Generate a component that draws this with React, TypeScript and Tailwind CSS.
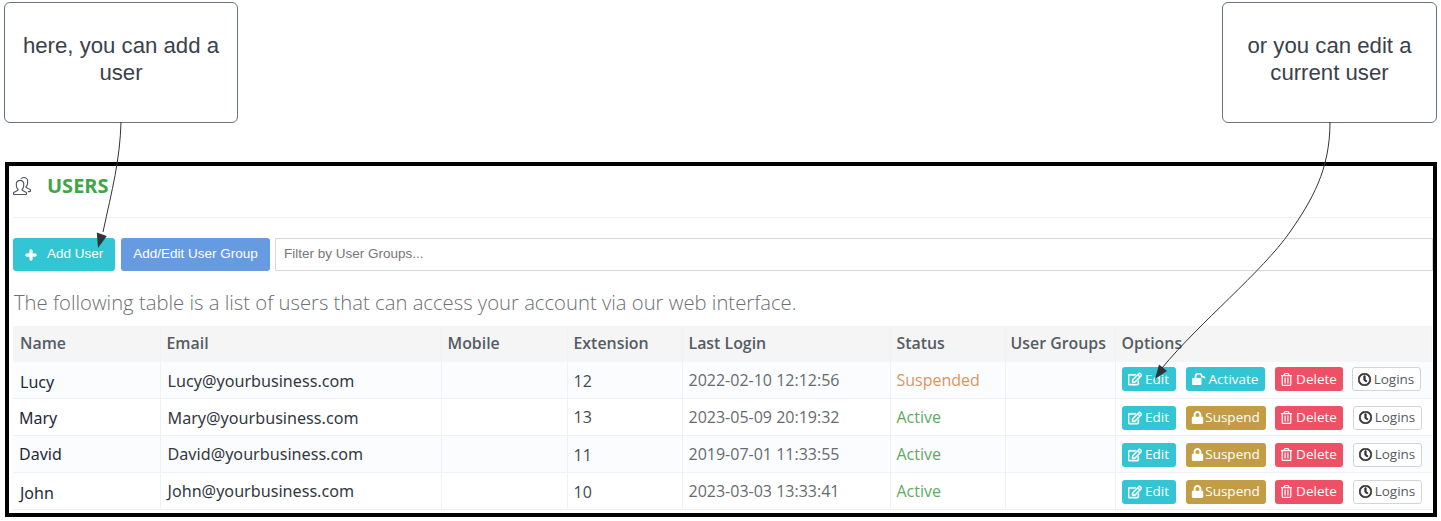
import { FaPlus, FaRegEdit, FaLock, FaRegTrashAlt, FaRegClock } from "react-icons/fa";
import { SlPeople } from "react-icons/sl";

const users = [
  { name: "Lucy", email: "Lucy@yourbusiness.com", ext: "12", login: "2022-02-10 12:12:56", status: "Suspended", rowCls: "h-[36px] bg-[#fbfcfe]", nameCls: "pl-[7px] pt-[4px]", emailCls: "pt-[2px]", extCls: "pt-[2px]", infoCls: "pt-[1px]", btnCls: "pb-[1px]" },
  { name: "Mary", email: "Mary@yourbusiness.com", ext: "13", login: "2023-05-09 20:19:32", status: "Active", rowCls: "h-[37px] bg-white", nameCls: "pl-[6px] pt-[2px]", emailCls: "pt-[4px]", extCls: "", infoCls: "", btnCls: "pt-[2px]" },
  { name: "David", email: "David@yourbusiness.com", ext: "11", login: "2019-07-01 11:33:55", status: "Active", rowCls: "h-[37px] bg-[#fbfcfe]", nameCls: "pl-[6px]", emailCls: "pt-[2px]", extCls: "pt-[2px]", infoCls: "", btnCls: "pt-[2px]" },
  { name: "John", email: "John@yourbusiness.com", ext: "10", login: "2023-03-03 13:33:41", status: "Active", rowCls: "h-[37px] bg-white", nameCls: "pl-[7px] pt-[4px]", emailCls: "pt-[2px]", extCls: "pt-[3px]", infoCls: "", btnCls: "pt-[2px]" },
];

const headers = ["Name", "Email", "Mobile", "Extension", "Last Login", "Status", "User Groups", "Options"];

function Callout({ lines, width }: { lines: string[]; width: string }) {
  return (
    <div className={`h-[121px] ${width} rounded-[6px] border border-[#6b7280] bg-white pt-[30px] text-center font-['Liberation_Sans',sans-serif] text-[22.2px] leading-[26.5px] text-[#3a414a]`}>
      {lines.map((l) => (
        <div key={l}>{l}</div>
      ))}
    </div>
  );
}

function Btn({ className, icon, label }: { className: string; icon: React.ReactNode; label: string }) {
  return (
    <span className={`flex h-[24px] items-center justify-center rounded-[3px] text-[13.5px] ${className}`}>
      {icon}
      {label}
    </span>
  );
}

function OpenLock() {
  return (
    <svg width="14" height="12" viewBox="0 0 14 12" className="shrink-0">
      <rect x="0" y="5" width="9.5" height="7" rx="1" fill="currentColor" />
      <path d="M3.5 5.5 V4 a3.2 3.2 0 0 1 6.4 -0.3 a3 3 0 0 1 3 1.5" stroke="currentColor" strokeWidth="1.8" fill="none" />
    </svg>
  );
}

export default function App() {
  return (
    <div className="relative h-[521px] w-[1441px] overflow-hidden bg-white font-['Open_Sans',sans-serif]">
      <div className="flex justify-between pl-[4px] pr-[4px] pt-[2px]">
        <Callout width="w-[234px]" lines={["here, you can add a", "user"]} />
        <Callout width="w-[215px]" lines={["or you can edit a", "current user"]} />
      </div>

      <div className="ml-[5px] mt-[39px] h-[355px] w-[1432px] overflow-hidden border-[4px] border-black bg-white pl-[4px]">
        <div className="flex h-[52px] items-center border-b border-[#eef0f2] pb-[12px]">
          <SlPeople className="text-[18px] text-[#4b5563]" />
          <span className="ml-[16px] text-[20px] font-bold text-[#3fa648]">USERS</span>
        </div>

        <div className="mt-[20px] flex h-[33px] font-['Liberation_Sans',sans-serif] text-[13.5px] text-white">
          <span className="flex w-[102px] items-center rounded-[3px] bg-[#33c5d3] pl-[12px]">
            <FaPlus className="mr-[10px] text-[12px] stroke-[40]" />
            Add User
          </span>
          <span className="ml-[6px] flex w-[149px] items-center justify-center rounded-[3px] bg-[#669ae1]">Add/Edit User Group</span>
          <div className="ml-[5px] flex flex-1 items-center border border-[#d9d9d9] pl-[8px] text-[#777]">Filter by User Groups...</div>
        </div>

        <p className="ml-[1px] mt-[17px] text-[20.25px] leading-[28px] font-light text-[#6c6f73]">
          The following table is a list of users that can access your account via our web interface.
        </p>

        <table className="mt-[10px] w-[1419px] table-fixed border-collapse text-[16px]">
          <colgroup>
            <col className="w-[147px]" />
            <col className="w-[281px]" />
            <col className="w-[126px]" />
            <col className="w-[115px]" />
            <col className="w-[208px]" />
            <col className="w-[115px]" />
            <col className="w-[110px]" />
            <col />
          </colgroup>
          <thead>
            <tr className="h-[36px] bg-[#f5f5f5]">
              {headers.map((h, i) => (
                <th key={h} className={`whitespace-nowrap border-x border-[#eef1f5] ${i === 0 ? "pl-[7px]" : i === 6 ? "pl-[5px]" : "pl-[6px]"} text-left text-[15.9px] font-semibold text-[#555c66] first:border-l-0`}>
                  {h}
                </th>
              ))}
            </tr>
          </thead>
          <tbody>
            {users.map((u) => (
              <tr key={u.name} className={`border-b border-[#eef1f5] ${u.rowCls}`}>
                <td className={`border-r border-[#eef1f5] font-['Noto_Sans',sans-serif] text-[#1f2a38] ${u.nameCls}`}>{u.name}</td>
                <td className={`border-r border-[#eef1f5] pl-[7px] font-['Noto_Sans',sans-serif] text-[16.15px] text-[#33393f] ${u.emailCls}`}>{u.email}</td>
                <td className="border-r border-[#eef1f5]" />
                <td className={`border-r border-[#eef1f5] pl-[6px] text-[#444a50] ${u.extCls}`}>{u.ext}</td>
                <td className={`border-r border-[#eef1f5] pl-[6px] text-[#666b70] ${u.infoCls}`}>{u.login}</td>
                <td className={`border-r border-[#eef1f5] pl-[6px] ${u.infoCls} ${u.status === "Active" ? "text-[#5cab62]" : "text-[#e0935a]"}`}>{u.status}</td>
                <td className="border-r border-[#eef1f5]" />
                <td className={`pl-[6px] ${u.btnCls}`}>
                  <div className="flex items-center">
                    <Btn className="w-[54px] gap-[3px] bg-[#33c5d3] text-white" icon={<FaRegEdit className="text-[14px] stroke-[20]" />} label="Edit" />
                    {u.status === "Active" ? (
                      <Btn className="ml-[10px] w-[80px] gap-[1px] bg-[#c29d45] text-white" icon={<FaLock className="text-[13px]" />} label="Suspend" />
                    ) : (
                      <Btn className="ml-[10px] w-[79px] gap-[3px] bg-[#33c5d3] text-white" icon={<OpenLock />} label="Activate" />
                    )}
                    <Btn className={`${u.status === "Active" ? "ml-[9px]" : "ml-[10px]"} w-[68px] gap-[3px] bg-[#ee5165] text-white`} icon={<FaRegTrashAlt className="text-[13px]" />} label="Delete" />
                    <Btn className={`${u.status === "Active" ? "ml-[10px]" : "ml-[9px]"} w-[69px] gap-[3px] border border-[#d4d4d4] bg-white text-[#555b61]`} icon={<FaRegClock className="text-[13px] text-[#333] stroke-[30]" />} label="Logins" />
                  </div>
                </td>
              </tr>
            ))}
          </tbody>
        </table>
      </div>

      <svg className="pointer-events-none absolute left-0 top-0" width="1441" height="521" fill="none">
        <path d="M121 122 C120 160 112 190 103 232" stroke="#2f343a" strokeWidth="1" />
        <path d="M98 248 L96.8 232.5 L106.8 236 Z" fill="#2f343a" />
        <path d="M1330 122 C1330 170 1312 200 1290 232 C1262 272 1200 322 1162 368" stroke="#2f343a" strokeWidth="1" />
        <path d="M1155 379 L1159 364.5 L1167 371 Z" fill="#2f343a" />
      </svg>
    </div>
  );
}
